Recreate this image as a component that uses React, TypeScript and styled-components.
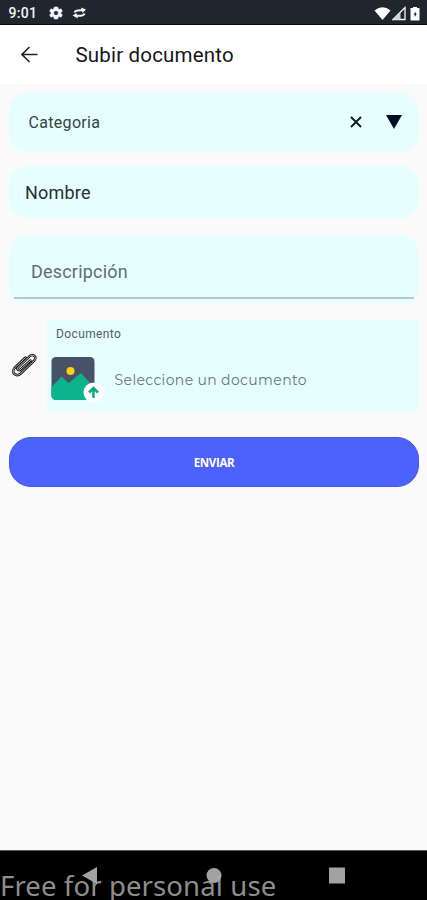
import React from "react";
import styled, { createGlobalStyle } from "styled-components";

const GlobalStyle = createGlobalStyle`
  * { box-sizing: border-box; }
  body { margin: 0; background: #fafafa; }
`;

const Screen = styled.div`
  width: 427px;
  height: 900px;
  display: flex;
  flex-direction: column;
  overflow: hidden;
  background: #fafafa;
  font-family: Roboto, sans-serif;
`;

const StatusBar = styled.header`
  height: 25px;
  flex: none;
  display: flex;
  align-items: center;
  padding: 2px 5px 0 8.5px;
  background: #202630;
  border-bottom: 1px solid #080b10;
  color: #f4f5f6;
`;

const Clock = styled.span`
  width: 39.5px;
  font-size: 14px;
  font-weight: 500;
  line-height: 18px;
  letter-spacing: 0.3px;
`;

const StatusIcons = styled.div<{ $end?: boolean }>`
  display: flex;
  align-items: center;
  gap: ${(p) => (p.$end ? "1px" : "8px")};
  margin-left: ${(p) => (p.$end ? "auto" : "0")};
  svg { display: block; }
`;

const AppBar = styled.div`
  height: 59px;
  flex: none;
  display: flex;
  align-items: center;
  padding: 0 20px 0 21px;
  background: #fff;
`;

const BackButton = styled.button`
  width: 54.5px;
  padding: 0;
  border: 0;
  background: none;
  svg { display: block; }
`;

const Title = styled.h1`
  margin: 1px 0 0;
  font-size: 20.5px;
  font-weight: 400;
  line-height: 26px;
  letter-spacing: 0.18px;
  color: #15161c;
`;

const Form = styled.form`
  flex: 1;
  display: flex;
  flex-direction: column;
  padding: 9px 8px 0 9px;
`;

const Field = styled.div<{ $height: number; $gap: number; $indent: number }>`
  height: ${(p) => p.$height}px;
  margin-bottom: ${(p) => p.$gap}px;
  padding-left: ${(p) => p.$indent}px;
  display: flex;
  align-items: center;
  border-radius: 18px;
  background: #e6fffe;
`;

const Label = styled.label<{ $size: number; $color: string; $spacing?: number }>`
  padding-top: 1px;
  font-size: ${(p) => p.$size}px;
  line-height: 24px;
  letter-spacing: ${(p) => p.$spacing ?? 0}px;
  color: ${(p) => p.$color};
`;

const SelectActions = styled.div`
  display: flex;
  align-items: center;
  gap: 24px;
  margin: 0 17px 2px auto;
  svg { display: block; }
`;

const TextArea = styled.div`
  height: 68px;
  margin-bottom: 17px;
  padding: 0 5px 4px;
  border-radius: 18px 18px 12px 12px;
  background: #e6fffe;
`;

const Underline = styled.div`
  height: 64px;
  padding: 25px 0 0 17px;
  border-bottom: 2px solid #b4cac9;
`;

const Attachment = styled.div`
  display: flex;
  height: 91px;
  margin-bottom: 26px;
`;

const ClipSlot = styled.div`
  width: 38px;
  flex: none;
  padding: 31px 0 0 2px;
  svg { display: block; }
`;

const DocumentPanel = styled.div`
  flex: 1;
  padding: 4px 0 0 4px;
  background: #e6fffe;
`;

const DocumentCaption = styled.div`
  height: 21px;
  padding-left: 5px;
  font-size: 12px;
  line-height: 21px;
  letter-spacing: 0.38px;
  color: #53605f;
`;

const FilePicker = styled.div`
  display: flex;
  align-items: center;
  height: 66px;
  svg { display: block; flex: none; }
`;

const FileHint = styled.span`
  margin: 3px 0 0 11.6px;
  font-family: Montserrat, Lato, sans-serif;
  font-size: 14px;
  line-height: 22px;
  letter-spacing: 0.36px;
  white-space: nowrap;
  color: #657776;
`;

const SubmitButton = styled.button`
  height: 50px;
  padding: 1px 0 0;
  border: 1px solid #4055ee;
  border-radius: 22px;
  background: #4d61fc;
  color: #fff;
  font-family: "Open Sans", sans-serif;
  font-size: 11.5px;
  font-weight: 700;
  letter-spacing: -0.35px;
`;

const NavigationBar = styled.footer`
  position: relative;
  height: 50px;
  flex: none;
  border-top: 1px solid #555;
  background: #000;
`;

const NavIcons = styled.div`
  display: flex;
  align-items: center;
  padding: 16px 0 0 82px;
  svg { display: block; }
`;

const Watermark = styled.div`
  position: absolute;
  left: 0;
  top: 21px;
  font-family: "Noto Sans", sans-serif;
  font-size: 27.5px;
  line-height: 28px;
  letter-spacing: 0.12px;
  white-space: nowrap;
  color: rgba(174, 174, 174, 0.84);
`;

const GearIcon = () => (
  <svg width="16" height="16" viewBox="0 0 24 24" fill="currentColor">
    <path fillRule="evenodd" d="M19.4 13a8 8 0 0 0 0-2l2.2-1.7-2.1-3.7-2.6 1.1a8 8 0 0 0-1.8-1L14.7 3h-5.400l-.4 2.700a8 8 0 0 0-1.800 1L4.500 5.600 2.400 9.300 4.600 11a8 8 0 0 0 0 2l-2.200 1.700 2.100 3.700 2.600-1.100a8 8 0 0 0 1.800 1l.4 2.700h5.400l.4-2.700a8 8 0 0 0 1.800-1l2.600 1.100 2.100-3.700zM12 15.500a3.500 3.500 0 1 1 0-7 3.500 3.500 0 0 1 0 7z" stroke="currentColor" strokeWidth=".8" />
  </svg>
);

const SyncIcon = () => (
  <svg width="15" height="12" viewBox="0 0 15 12" fill="none" stroke="currentColor" strokeWidth="2">
    <path d="M2.500 5.500C3 3 6 3 10 3.200" />
    <path d="M9 .5 14 2.500 10.500 6z" fill="currentColor" stroke="none" />
    <path d="M12.500 6.500C12 9 9 9 5 8.800" />
    <path d="M4.500 6 .5 8.500l5.500 3z" fill="currentColor" stroke="none" />
  </svg>
);

const PaperclipIcon = () => {
  const wire =
    "M19.500 9.500 9.300 18.700c-1.800 1.600-4-.8-2.200-2.500L18.500 5.300c3.500-3 8 .6 4.800 4.200L9.800 22.500c-4.500 4-10.500-.8-6.300-5.500L14.500 6.500";
  return (
    <svg width="28" height="28" viewBox="0 0 28 28" fill="none" strokeLinecap="round" strokeLinejoin="round">
      <path d={wire} stroke="#111" strokeWidth="2.500" />
      <path d={wire} stroke="#eee" strokeWidth=".8" />
    </svg>
  );
};

export default function App() {
  return (
    <Screen>
      <GlobalStyle />
      <StatusBar>
        <Clock>9:01</Clock>
        <StatusIcons><GearIcon /><SyncIcon /></StatusIcons>
        <StatusIcons $end>
          <svg width="17" height="15" viewBox="0 0 17 15"><path d="M.5 4.500Q8.500-2 16.500 4.500L8.500 14z" fill="#fff" /></svg>
          <svg width="14" height="15" viewBox="0 0 14 15">
            <path d="M1 13.500 13 1.500v12z" fill="none" stroke="#f4f5f6" strokeWidth="1.300" />
            <path d="M1 13.500 8.500 6v7.500z" fill="#cfd2d6" />
          </svg>
          <svg width="15" height="15" viewBox="0 0 15 15">
            <path fillRule="evenodd" d="M6 1h4v1h2.500v12.500h-9V2H6zM8.700 5.500 6.500 8.700h1.300v2.300l2-3.200H8.700z" fill="#fff" />
          </svg>
        </StatusIcons>
      </StatusBar>
      <AppBar>
        <BackButton type="button" aria-label="Volver">
          <svg width="17" height="17" viewBox="0 0 17 17" fill="none" stroke="#20212a" strokeWidth="1.600">
            <path d="M16.500 8.500H1.200M8.500 1 1 8.500 8.500 16" />
          </svg>
        </BackButton>
        <Title>Subir documento</Title>
      </AppBar>
      <Form>
        <Field $height={59} $gap={14} $indent={19.5}>
          <Label $size={16} $color="#394342" $spacing={0.32}>Categoria</Label>
          <SelectActions>
            <svg width="12" height="12" viewBox="0 0 12 12" stroke="#111919" strokeWidth="1.900"><path d="m1 1 10 10M11 1 1 11" /></svg>
            <svg width="16" height="14" viewBox="0 0 16 14"><path d="M0 0h16L8 14z" fill="#020b26" /></svg>
          </SelectActions>
        </Field>
        <Field $height={52} $gap={17} $indent={16}>
          <Label $size={18} $color="#253130" $spacing={0.2}>Nombre</Label>
        </Field>
        <TextArea>
          <Underline><Label $size={18} $color="#5e6f6d" $spacing={0.2}>Descripción</Label></Underline>
        </TextArea>
        <Attachment>
          <ClipSlot>
            <PaperclipIcon />
          </ClipSlot>
          <DocumentPanel>
            <DocumentCaption>Documento</DocumentCaption>
            <FilePicker>
              <svg width="52" height="50" viewBox="0 0 52 50">
                <rect x=".5" y="4" width="43" height="43" rx="4.500" fill="#475269" />
                <path d="M.5 34 10.500 23.500l7 6.500L30 20l13.500 15v7.500A4.500 4.500 0 0 1 39 47H5a4.500 4.500 0 0 1-4.500-4.500z" fill="#0cb28c" />
                <circle cx="19.500" cy="18" r="4" fill="#ffcf10" />
                <circle cx="42.500" cy="39.500" r="10" fill="#fff" />
                <path d="m38 39.500 4.500-4.500 4.500 4.500M42.500 36v9" fill="none" stroke="#12aa84" strokeWidth="2.500" />
              </svg>
              <FileHint>Seleccione un documento</FileHint>
            </FilePicker>
          </DocumentPanel>
        </Attachment>
        <SubmitButton type="button">ENVIAR</SubmitButton>
      </Form>
      <NavigationBar>
        <NavIcons>
          <svg width="270" height="17" viewBox="0 0 270 17" fill="#a2a2a2">
            <path d="M0 8.500 15 0v17z" />
            <circle cx="132" cy="8.500" r="7.500" />
            <rect x="247" y=".5" width="16" height="16" rx=".5" />
          </svg>
        </NavIcons>
        <Watermark>Free for personal use</Watermark>
      </NavigationBar>
    </Screen>
  );
}
